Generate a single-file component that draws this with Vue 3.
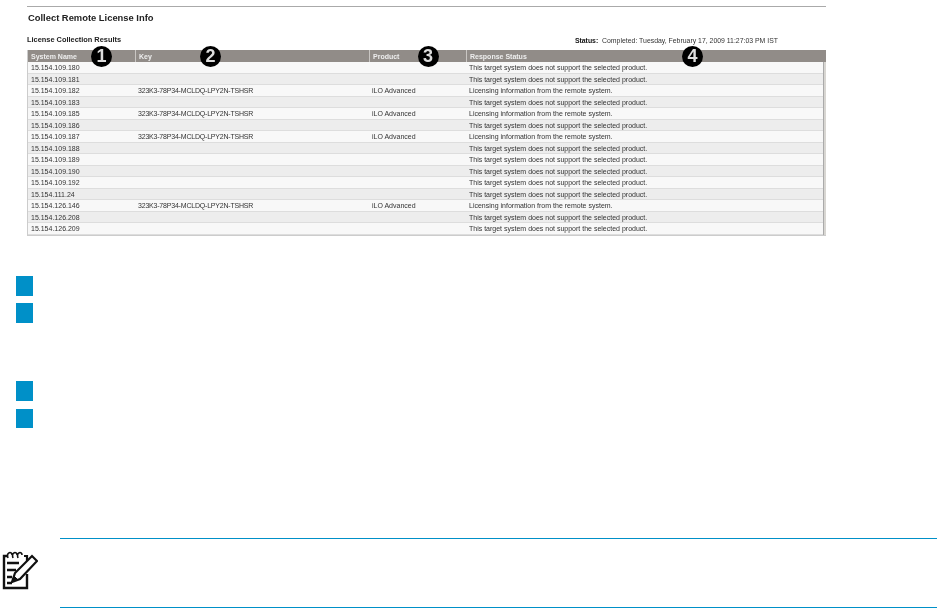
<script setup>
const no = 'This target system does not support the selected product.'
const yes = 'Licensing information from the remote system.'
const key = '323K3-78P34-MCLDQ-LPY2N-TSHSR'
const rows = [
  ['15.154.109.180', '', '', no],
  ['15.154.109.181', '', '', no],
  ['15.154.109.182', key, 'iLO Advanced', yes],
  ['15.154.109.183', '', '', no],
  ['15.154.109.185', key, 'iLO Advanced', yes],
  ['15.154.109.186', '', '', no],
  ['15.154.109.187', key, 'iLO Advanced', yes],
  ['15.154.109.188', '', '', no],
  ['15.154.109.189', '', '', no],
  ['15.154.109.190', '', '', no],
  ['15.154.109.192', '', '', no],
  ['15.154.111.24', '', '', no],
  ['15.154.126.146', key, 'iLO Advanced', yes],
  ['15.154.126.208', '', '', no],
  ['15.154.126.209', '', '', no]
]
const heads = ['System Name', 'Key', 'Product', 'Response Status']
const callouts = [
  { n: '1', x: 63 },
  { n: '2', x: 172 },
  { n: '3', x: 389.5 },
  { n: '4', x: 654 }
]
const steps = ['s1', 's2', 's3', 's4']
</script>

<template>
  <div class="page">
    <section class="shot">
      <h1 class="title">Collect Remote License Info</h1>
      <div class="meta">
        <strong class="label">License Collection Results</strong>
        <span class="status"><b>Status:</b>&nbsp; Completed: Tuesday, February 17, 2009 11:27:03 PM IST</span>
      </div>
      <div class="table">
        <div class="row head">
          <div v-for="h in heads" :key="h" class="cell">{{ h }}</div>
        </div>
        <div v-for="r in rows" :key="r[0]" class="row body">
          <div v-for="(c, i) in r" :key="i" class="cell" :class="{ keycell: i === 1 }">{{ c }}</div>
        </div>
        <div class="scroll"></div>
        <span v-for="c in callouts" :key="c.n" class="callout" :style="{ left: c.x + 'px' }">{{ c.n }}</span>
      </div>
    </section>

    <ul class="steps">
      <li v-for="s in steps" :key="s" class="square" :class="s"></li>
    </ul>

    <div class="note">
      <div class="note-icon">
        <svg width="36" height="40" viewBox="0 0 36 40" fill="none" stroke="#111">
          <path d="M5 5H2V37H25V23" stroke-width="2.4"/>
          <path d="M22 5H25V11" stroke-width="2.2"/>
          <path d="M6 7C4 1 10 0 10 4M11 7C9 1 15 0 15 4M16 7C14 1 20 0 20 4" stroke-width="1.6"/>
          <path d="M5 12H17M5 19H14M5 26H10M5 32H10" stroke-width="2.4"/>
          <path d="M10 31L13 22L30 5L35 10L18 28Z" fill="#fff" stroke-width="2.2"/>
          <path d="M10 31L12 25L15 28Z" fill="#111" stroke-width="1"/>
        </svg>
      </div>
      <div class="note-body"></div>
    </div>
  </div>
</template>

<style scoped>
.page {
  width: 937px;
  height: 608px;
  overflow: hidden;
  background: #fff;
  font-family: "Liberation Sans", Arial, sans-serif;
  color: #222;
}
.shot {
  margin-left: 27px;
  width: 799px;
  margin-top: 6px;
  border-top: 1px solid #aaa;
  filter: blur(0.4px);
}
.title {
  margin: 0;
  padding: 4px 0 0 1px;
  height: 13px;
  font-size: 9.4px;
  line-height: 13px;
  font-weight: bold;
  color: #222;
}
.meta {
  display: flex;
  justify-content: space-between;
  align-items: flex-end;
  height: 17px;
  padding-top: 4px;
  line-height: 9px;
  padding-right: 48px;
}
.label { font-weight: bold; color: #222; font-size: 7.4px; position: relative; top: -1px; }
.status { color: #333; font-size: 6.9px; }
.status b { color: #111; }
.table {
  position: relative;
  margin-top: 5px;
  border-left: 1px solid #ccc;
  border-bottom: 1px solid #ccc;
}
.row {
  display: grid;
  grid-template-columns: 107px 234px 97px 1fr;
  font-size: 7px;
}
.head {
  height: 12px;
  background: #918c88;
  color: #eee;
  font-weight: bold;
  line-height: 14px;
}
.head .cell + .cell { border-left: 1px solid #c9c6c3; }
.body {
  height: 11.5px;
  line-height: 11px;
  background: #f8f8f8;
  border-bottom: 1px solid #ddd;
  box-sizing: border-box;
  color: #333;
  padding-right: 4px;
}
.body:nth-of-type(odd) { background: #ededed; }
.cell {
  padding-left: 3px;
  white-space: nowrap;
  overflow: hidden;
}
.keycell { letter-spacing: -0.2px; }
.scroll {
  position: absolute;
  right: 0;
  top: 12px;
  bottom: 0;
  width: 3px;
  background: #d8d6d2;
  border-left: 1px solid #aaa;
  box-sizing: border-box;
}
.callout {
  position: absolute;
  top: -4px;
  width: 21px;
  height: 21px;
  border-radius: 50%;
  background: #000;
  color: #ddd;
  font-size: 18px;
  font-weight: bold;
  line-height: 21px;
  text-align: center;
}
.steps {
  list-style: none;
  margin: 0;
  padding: 0 0 0 16px;
  position: absolute;
  top: 276px;
  display: flex;
  flex-direction: column;
}
.square { width: 17px; height: 20px; background: #0090c8; }
.s1 { margin-bottom: 7px; }
.s2 { margin-bottom: 58px; }
.s3 { margin-bottom: 8px; }
.s4 { height: 19px; }
.note {
  position: absolute;
  top: 538px;
  left: 0;
  width: 937px;
  display: flex;
}
.note-icon {
  width: 60px;
  padding: 13px 0 0 2px;
  box-sizing: border-box;
}
.note-body {
  flex: 1;
  height: 70px;
  box-sizing: border-box;
  border-top: 1px solid #0090c8;
  border-bottom: 1px solid #0090c8;
}
</style>
